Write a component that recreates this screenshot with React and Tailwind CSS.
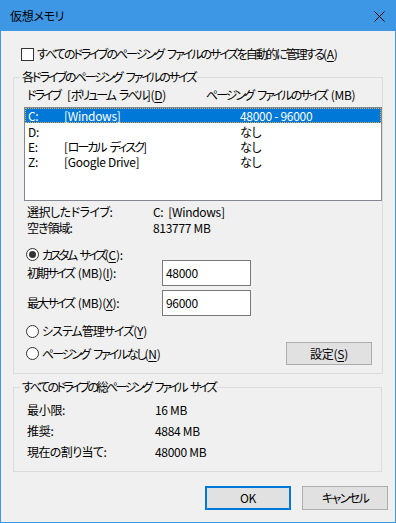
import React from "react";

const TR = {
  a: "tracking-[-1px]",
  b: "tracking-[-1.6px]",
  c: "tracking-[-2px]",
  d: "tracking-[-2.5px]",
  e: "tracking-[-2.9px]",
};

function J({ t = "c", children }) {
  return <span className={TR[t]}>{children}</span>;
}

function Sp({ w = 4 }) {
  return <span className={w === 4 ? "inline-block w-[4px]" : "inline-block w-[7px]"} />;
}

function Radio({ checked }) {
  return (
    <span className="w-[13px] h-[13px] rounded-full border border-[#333] bg-white flex items-center justify-center shrink-0">
      {checked && <span className="w-[7px] h-[7px] rounded-full bg-[#333]" />}
    </span>
  );
}

function U({ children }) {
  return <span className="underline underline-offset-2">{children}</span>;
}

export default function App() {
  const rows = [
    { d: "C:", l: "[Windows]", s: "48000 - 96000", sel: true },
    { d: "D:", l: "", s: "なし" },
    {
      d: "E:",
      l: (
        <>
          [<J>ローカル</J>
          <Sp />
          <J>ディスク</J>]
        </>
      ),
      s: "なし",
    },
    { d: "Z:", l: "[Google Drive]", s: "なし" },
  ];
  return (
    <div className="w-[396px] h-[523px] bg-[#f0f0f0] border border-[#3e97e4] flex flex-col text-[12px] leading-[16px] text-black tracking-[-0.3px] whitespace-nowrap font-['Noto_Sans_CJK_JP','Noto_Sans',sans-serif] [font-feature-settings:'palt']">
      {/* title bar */}
      <div className="h-[30px] bg-[#3e97e4] flex items-center justify-between pl-[9px] pr-[10px] shrink-0">
        <span className="text-black">仮想メモリ</span>
        <svg width="11" height="11" viewBox="0 0 11 11" className="mt-[1px]">
          <path d="M0.5 0.5 L10.5 10.5 M10.5 0.5 L0.5 10.5" stroke="#000" strokeWidth="1" />
        </svg>
      </div>

      {/* auto manage checkbox */}
      <div className="mt-[15px] pl-[20px] flex items-center gap-[3px] h-[16px]">
        <span className="w-[13px] h-[13px] border border-[#333] bg-white shrink-0" />
        <span>
          <J>すべてのドライブのページング</J>
          <Sp />
          <J>ファイルのサイズを自動的に管理する</J>(<U>A</U>)
        </span>
      </div>

      {/* group 1 */}
      <fieldset className="mt-[7px] ml-[12px] w-[370px] border border-[#dcdcdc] pb-[8px]">
        <legend className="ml-[6px] px-[2px] leading-[16px]">
          <J>各ドライブのページング</J>
          <Sp />
          <J>ファイルのサイズ</J>
        </legend>
        <div className="mt-[2px] pl-[13px] flex h-[16px]">
          <span className="w-[179px]">
            <J>ドライブ</J>
            <Sp w={7} />[<J>ボリューム</J>
            <Sp />
            <J>ラベル</J>](<U>D</U>)
          </span>
          <span>
            <J>ページング</J>
            <Sp />
            <J>ファイルのサイズ</J>
            <Sp />
            (MB)
          </span>
        </div>
        <div className="mt-[4px] ml-[10px] w-[358px] h-[94px] border border-[#828790] bg-white">
          {rows.map((r) => (
            <div
              key={r.d}
              className={
                r.sel
                  ? "h-[15px] leading-[14px] flex bg-[#0078d7] text-white border border-dotted border-[#e0b050]"
                  : "h-[15px] leading-[15px] flex border border-transparent"
              }
            >
              <span className="w-[38px] pl-[2px]">{r.d}</span>
              <span className="w-[176px]">{r.l}</span>
              <span>{r.s}</span>
            </div>
          ))}
        </div>

        <div className="mt-[3px] pl-[13px] flex h-[16px]">
          <span className="w-[126px] tracking-[-0.5px]">選択したドライブ:</span>
          <span>C:&nbsp;&nbsp;[Windows]</span>
        </div>
        <div className="pl-[13px] flex h-[16px]">
          <span className="w-[126px]">
            <J t="a">空き領域</J>:
          </span>
          <span>813777 MB</span>
        </div>

        <div className="mt-[12px] pl-[12px] flex items-center gap-[3px] h-[13px]">
          <Radio checked />
          <span>
            <J t="d">カスタム</J>
            <Sp />
            <J t="d">サイズ</J>(<U>C</U>):
          </span>
        </div>
        <div className="mt-[-1px] pl-[13px] flex items-center h-[26px]">
          <span className="w-[135px]">
            <J t="c">初期サイズ</J>
            <Sp />
            (MB)(<U>I</U>):
          </span>
          <div className="w-[89px] h-[26px] border border-[#7a7a7a] bg-white pl-[3px] flex items-center">48000</div>
        </div>
        <div className="mt-[4px] pl-[13px] flex items-center h-[26px]">
          <span className="w-[135px]">
            <J t="c">最大サイズ</J>
            <Sp />
            (MB)(<U>X</U>):
          </span>
          <div className="w-[89px] h-[26px] border border-[#7a7a7a] bg-white pl-[3px] flex items-center">96000</div>
        </div>

        <div className="mt-[7px] pl-[12px] flex items-center gap-[3px] h-[16px]">
          <Radio />
          <span>
            <J t="a">システム管理サイズ</J>(<U>Y</U>)
          </span>
        </div>
        <div className="mt-[3px] pl-[12px] pr-[10px] flex items-center h-[23px]">
          <Radio />
          <span className="ml-[3px]">
            <J>ページング</J>
            <Sp />
            <J>ファイルなし</J>(<U>N</U>)
          </span>
          <div className="ml-auto w-[86px] h-[23px] border border-[#adadad] bg-[#e1e1e1] flex items-center justify-center">
            <span>
              設定(<U>S</U>)
            </span>
          </div>
        </div>
      </fieldset>

      {/* group 2 */}
      <fieldset className="mt-[5px] ml-[12px] w-[369px] border border-[#dcdcdc] pb-[11px]">
        <legend className="ml-[6px] px-[2px] leading-[16px]">
          <J t="d">すべてのドライブの総ページング</J>
          <Sp />
          <J t="d">ファイル</J>
          <Sp />
          <J t="d">サイズ</J>
        </legend>
        <div className="mt-[7px] pl-[13px] flex h-[16px]">
          <span className="w-[128px]">最小限:</span>
          <span>16 MB</span>
        </div>
        <div className="mt-[5px] pl-[13px] flex h-[16px]">
          <span className="w-[128px]">推奨:</span>
          <span>4884 MB</span>
        </div>
        <div className="mt-[5px] pl-[13px] flex h-[16px]">
          <span className="w-[128px] tracking-[-0.6px]">現在の割り当て:</span>
          <span>48000 MB</span>
        </div>
      </fieldset>

      {/* buttons */}
      <div className="mt-[14px] flex pl-[204px] gap-[11px]">
        <div className="w-[86px] h-[24px] border-2 border-[#0078d7] bg-[#e1e1e1] flex items-center justify-center">OK</div>
        <div className="w-[86px] h-[24px] border border-[#adadad] bg-[#e1e1e1] flex items-center justify-center">
          <J t="b">キャンセル</J>
        </div>
      </div>
    </div>
  );
}
